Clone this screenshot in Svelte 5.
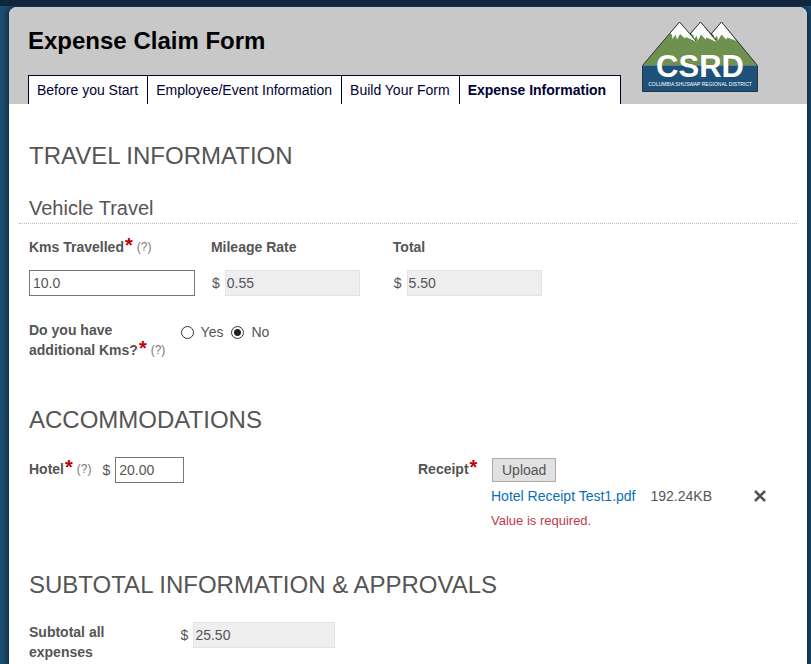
<script>
  const tabs = ["Before you Start", "Employee/Event Information", "Build Your Form", "Expense Information"];
  const current = "Expense Information";

  let kms = $state("10.0");
  let additional = $state("no");
  let hotel = $state("20.00");
</script>

{#snippet required()}<span class="required">*</span>{/snippet}
{#snippet help()}<span class="help">(?)</span>{/snippet}

<main class="page">
  <header>
    <div class="heading">
      <h1>Expense Claim Form</h1>
      <nav>
        {#each tabs as tab}
          <a href="#form" class:active={tab === current}>{tab}</a>
        {/each}
      </nav>
    </div>

    <svg class="logo" viewBox="0 0 116 71" role="img" aria-label="Columbia Shuswap Regional District">
      <path d="M.5 44.500 37.500 1l10.500 12L58.500 1 69 13 79.500 1l36 43.500z" fill="#6f9150" />
      <path d="M.5 44.500h115v26H.5z" fill="#1e5179" />
      <path
        d="M37.500 1 28 12.500l2 1 .5 4.500 3-4.500 1.500 5 3-5.500 5 4.500 1-1.500 11 5-6-7zM58.500 1 49 12.500l2.500 2 .5 4.500 2.500-4.500 1.500 5 3-6 4.500 5 1-2 10 4.500-5-6zM79.500 1 70 12.500l2 2-.5 4.500 3.500-4.500 1 5 3.500-6 4.500 5 1.500-2 9 3.500z"
        fill="#fff"
      />
      <path
        d="M.5 44.500 37.500 1l10.500 12L58.500 1 69 13 79.500 1l36 43.500v26H.5z"
        fill="none"
        stroke="#26343b"
      />
      <path d="M48 13l6 7M69 13l5 6" stroke="#26343b" />
      <text class="initials" x="58" y="56" text-anchor="middle">CSRD</text>
      <text class="district" x="58" y="65" text-anchor="middle">COLUMBIA SHUSWAP REGIONAL DISTRICT</text>
    </svg>
  </header>

  <form id="form">
    <h2>TRAVEL INFORMATION</h2>
    <h3>Vehicle Travel</h3>

    <div class="row travel">
      <div class="field">
        <div class="label"><label for="kms">Kms Travelled</label>{@render required()}{@render help()}</div>
        <input id="kms" type="text" bind:value={kms} />
      </div>
      <div class="field">
        <div class="label"><label for="rate">Mileage Rate</label></div>
        <div class="money"><span>$</span><input id="rate" type="text" value="0.55" readonly /></div>
      </div>
      <div class="field">
        <div class="label"><label for="total">Total</label></div>
        <div class="money"><span>$</span><input id="total" type="text" value="5.50" readonly /></div>
      </div>
    </div>

    <div class="row additional" role="radiogroup" aria-labelledby="additional-label">
      <div class="side" id="additional-label">Do you have additional Kms?{@render required()}{@render help()}</div>
      <div class="choices">
        <label><input type="radio" name="additional" value="yes" bind:group={additional} />Yes</label>
        <label><input type="radio" name="additional" value="no" bind:group={additional} />No</label>
      </div>
    </div>

    <h2>ACCOMMODATIONS</h2>

    <div class="row accommodations">
      <div class="hotel">
        <div class="label"><label for="hotel">Hotel</label>{@render required()}{@render help()}</div>
        <div class="money"><span>$</span><input id="hotel" type="text" bind:value={hotel} /></div>
      </div>
      <div class="receipt">
        <div class="label"><label for="upload">Receipt</label>{@render required()}</div>
        <div class="files">
          <button id="upload" class="upload" type="button">Upload</button>
          <div class="file">
            <a href="#receipt">Hotel Receipt Test1.pdf</a>
            <span>192.24KB</span>
            <button class="remove" type="button" aria-label="Remove file">
              <svg viewBox="0 0 12 12"><path d="M1 1l10 10M11 1 1 11" /></svg>
            </button>
          </div>
          <p class="error">Value is required.</p>
        </div>
      </div>
    </div>

    <h2>SUBTOTAL INFORMATION &amp; APPROVALS</h2>

    <div class="row subtotal">
      <label class="side" for="subtotal">Subtotal all expenses</label>
      <div class="money"><span>$</span><input id="subtotal" type="text" value="25.50" readonly /></div>
    </div>
  </form>
</main>

<style>
  :global(html) {
    height: 100%;
    overflow: hidden;
    background: #1d4e74;
  }

  :global(body) {
    border-top: 6px solid #10263b;
    font-family: "Liberation Sans", Arial, sans-serif;
    font-size: 14px;
    color: #555;
  }

  .page {
    margin: 1px 4px 0 9px;
    min-height: 100vh;
    background: #fff;
    border-radius: 8px 8px 0 0;
    box-shadow: 0 0 8px rgba(0, 0, 0, 0.8);
  }

  header {
    display: flex;
    align-items: flex-end;
    justify-content: space-between;
    padding: 14px 49px 0 19px;
    background: #c8c8c8;
    border-radius: 8px 8px 0 0;
  }

  h1 {
    margin: 0 0 20px;
    font-size: 24px;
    line-height: 28px;
    color: #000;
  }

  nav {
    display: flex;
    background: #fff;
    border: 1px solid #003;
    border-bottom: 0;
  }

  nav a {
    padding: 0 9px 0 8px;
    line-height: 28px;
    color: #003;
    text-decoration: none;
    white-space: nowrap;
  }

  nav a + a {
    border-left: 1px solid #003;
  }

  nav .active {
    padding-right: 14px;
    font-weight: bold;
  }

  .logo {
    flex: none;
    width: 116px;
    height: 71px;
    margin-bottom: 12px;
  }

  .initials {
    font-size: 31px;
    font-weight: bold;
    fill: #fff;
  }

  .district {
    font-size: 5px;
    fill: #fff;
  }

  form {
    padding: 38px 20px 0;
  }

  h2 {
    margin: 0;
    font-size: 24px;
    font-weight: normal;
    line-height: 28px;
  }

  h3 {
    margin: 25px -10px 0;
    padding: 0 10px 2px;
    font-size: 20px;
    font-weight: normal;
    line-height: 26px;
    border-bottom: 1px dotted #bbb;
  }

  .row {
    display: grid;
  }

  .travel {
    grid-template-columns: repeat(3, 24%);
    margin-top: 13px;
  }

  .field:first-child input {
    width: 91%;
  }

  .field .money {
    padding: 0 33px 0 1px;
  }

  .label,
  .side {
    font-weight: bold;
    line-height: 20px;
  }

  .field .label {
    margin-bottom: 13px;
  }

  .required {
    margin-left: 1px;
    font-size: 20px;
    line-height: 10px;
    color: #c00000;
  }

  .help {
    margin-left: 4px;
    font-size: 12px;
    font-weight: normal;
    vertical-align: 1px;
    color: #777;
  }

  input[type="text"] {
    box-sizing: border-box;
    min-width: 0;
    height: 26px;
    padding: 0 3px;
    border: 1px solid #767676;
    background: #fff;
    font: inherit;
    color: #555;
  }

  input[readonly] {
    padding: 0 1px;
    border-color: #e3e3e3;
    background: #eee;
  }

  .money {
    display: flex;
    align-items: center;
    gap: 5px;
  }

  .money input {
    flex: 1;
  }

  .additional,
  .subtotal {
    grid-template-columns: 20% 1fr;
  }

  .additional {
    margin: 24px 0 46px;
  }

  .choices {
    display: flex;
    gap: 8px;
  }

  .choices label {
    display: flex;
    align-items: center;
    gap: 7px;
    height: 24px;
  }

  .choices input {
    appearance: none;
    width: 13px;
    height: 13px;
    margin: 0;
    border: 1px solid #333;
    border-radius: 50%;
    background: #fff;
  }

  .choices input:checked {
    background: radial-gradient(circle, #222 3px, #fff 4px);
  }

  .accommodations {
    grid-template-columns: 389fr 369fr;
    margin: 23px 0 41px;
  }

  .accommodations .label {
    padding-top: 2px;
  }

  .hotel {
    display: flex;
    align-items: flex-start;
    gap: 11px;
  }

  .hotel .money input {
    flex: none;
    width: 69px;
  }

  .receipt {
    display: grid;
    grid-template-columns: 73px 1fr;
  }

  .files {
    padding-top: 1px;
  }

  .upload {
    height: 24px;
    margin-left: 1px;
    padding: 0 9px;
    border: 1px solid #aaa;
    background: #e1e1e1;
    font: inherit;
    color: #555;
  }

  .file {
    display: flex;
    align-items: center;
    gap: 15px;
    height: 28px;
  }

  .file a {
    color: #0a6ebd;
    text-decoration: none;
  }

  .remove {
    display: flex;
    margin: 0 21px 0 auto;
    padding: 0;
    border: 0;
    background: none;
  }

  .remove svg {
    width: 12px;
    height: 12px;
    stroke: #505050;
    stroke-width: 2.500;
  }

  .error {
    margin: 2px 0 0;
    font-size: 13px;
    line-height: 18px;
    color: #c0394b;
  }

  .subtotal {
    margin-top: 23px;
  }

  .subtotal .side {
    width: 100px;
  }

  .subtotal .money {
    height: 26px;
  }

  .subtotal .money input {
    flex: none;
    width: 142px;
  }
</style>
